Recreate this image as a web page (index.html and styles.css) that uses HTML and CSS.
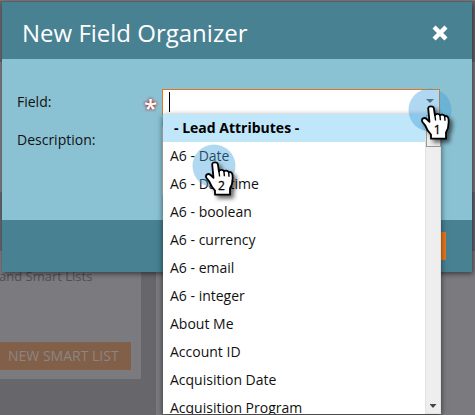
FILE: index.html
```html
<!DOCTYPE html>
<html lang="en">
<head>
<meta charset="utf-8">
<title>New Field Organizer</title>
<link rel="stylesheet" href="styles.css">
</head>
<body>
<main class="stage">
  <section class="backdrop">
    <div class="strip"></div>
    <div class="panels">
      <article class="card">
        <p class="card-text">and Smart Lists</p>
        <button class="card-button">NEW SMART LIST</button>
      </article>
      <article class="card-next"></article>
    </div>
  </section>
  <section class="modal">
    <header class="modal-header">
      <h1 class="title">New Field Organizer</h1>
      <svg class="close" width="16" height="16" viewBox="0 0 16 16"><path d="M3.600 3.600L12.400 12.400M12.400 3.600L3.600 12.400" stroke="#fff" stroke-width="4.400" stroke-linecap="square"/></svg>
    </header>
    <div class="modal-body">
      <div class="row">
        <label class="label">Field:</label>
        <span class="required">*</span>
        <div class="combo"><i class="caret"></i><i class="arrow"></i></div>
      </div>
      <div class="row row-description">
        <label class="label">Description:</label>
        <div class="textarea"></div>
      </div>
    </div>
    <footer class="modal-footer"><div class="submit"></div></footer>
  </section>
  <div class="menu">
    <ul class="options">
      <li class="group">- Lead Attributes -</li>
      <li>A6 - Date</li>
      <li>A6 - Datetime</li>
      <li>A6 - boolean</li>
      <li>A6 - currency</li>
      <li>A6 - email</li>
      <li>A6 - integer</li>
      <li>About Me</li>
      <li>Account ID</li>
      <li>Acquisition Date</li>
      <li>Acquisition Program</li>
    </ul>
    <div class="scrollbar"><div class="thumb"></div><i class="down"></i></div>
  </div>
  <div class="pointer pointer-one">
    <svg width="60" height="64" viewBox="0 0 60 64">
      <circle class="halo" cx="22" cy="22" r="21.500"/>
      <g class="hand"><path class="palm" d="M20.200 20.500C20 17.700 25.500 17.500 25.900 20.300L26.900 27.300C27.800 25.300 31.300 25.500 31.900 27.300C33.200 26 36 26.400 36.700 28.300C38.500 27.500 40.400 28.500 40.500 31.200C41 36 40.700 40 38 44.500V50.700H23V46.500C20 43.300 18.300 40.500 17.300 37.600L14.300 33.700C13 30.600 16.300 28.800 18.600 31L21.500 33.800Z"/><path class="knuckle" d="M26.900 27l.7 5.500M31.900 27.300l.5 5M36.700 28.300l.3 4.500"/></g>
      <text class="number" x="29.200" y="46">1</text>
    </svg>
  </div>
  <div class="pointer pointer-two">
    <svg width="60" height="64" viewBox="0 0 60 64">
      <circle class="halo" cx="22" cy="22" r="21.500"/>
      <g class="hand"><path class="palm" d="M20.200 20.500C20 17.700 25.500 17.500 25.900 20.300L26.900 27.300C27.800 25.300 31.300 25.500 31.900 27.300C33.200 26 36 26.400 36.700 28.300C38.500 27.500 40.400 28.500 40.500 31.200C41 36 40.700 40 38 44.500V50.700H23V46.500C20 43.300 18.300 40.500 17.300 37.600L14.300 33.700C13 30.600 16.300 28.800 18.600 31L21.500 33.800Z"/><path class="knuckle" d="M26.900 27l.7 5.500M31.900 27.300l.5 5M36.700 28.300l.3 4.500"/></g>
      <text class="number" x="29.500" y="46">2</text>
    </svg>
  </div>
</main>
</body>
</html>
```

FILE: styles.css
```css
* { box-sizing: border-box; }
body { margin: 0; font: 14px/20px "Open Sans", "Noto Sans", sans-serif; color: #111; }
.stage { position: relative; width: 475px; height: 415px; overflow: hidden; background: #67666b; }
.backdrop { height: 415px; }
.strip { height: 251px; background: linear-gradient(#656469 0 61px, #7a797e 61px 191px, #626670 191px); border-top: 1px solid #77767b; }
.panels { display: flex; gap: 15px; }
.card { width: 141px; height: 128px; background: #7b7a7f; padding-top: 15px; }
.card-next { flex: 1; height: 164px; background: #7b7a7f; }
.card-text { margin: 0 0 0 -1px; height: 20px; line-height: 20px; font-size: 13px; color: #515055; white-space: nowrap; }
.card-button { display: block; width: 131px; height: 28px; margin: 56px 0 0; padding: 0 0 0 8px; border: 0; background: #815f49; color: #8d8584; font: 14px/28px "Open Sans", sans-serif; text-align: left; white-space: nowrap; }
.modal { position: absolute; left: 2px; top: 2px; width: 470px; height: 270px; display: flex; flex-direction: column; box-shadow: 1px 2px 5px rgba(0,0,0,.5); }
.modal-header { height: 57px; background: #478192; display: flex; align-items: center; justify-content: space-between; padding: 4px 24px 0 20px; }
.title { margin: 0; color: #fff; font-size: 24px; font-weight: 400; line-height: 36px; white-space: nowrap; }
.modal-body { height: 161px; background: #8ac2d3; padding-top: 30px; }
.row { display: flex; height: 26px; padding-left: 15px; }
.label { width: 126px; line-height: 26px; }
.required { width: 19px; padding-left: 1px; font-size: 24px; line-height: 37px; font-weight: 600; color: #fff; text-shadow: 0 0 3px #b03030, 0 0 3px #b03030; }
.combo { width: 278px; height: 26px; background: #fff; border: 1px solid #e0751d; display: flex; justify-content: space-between; padding: 2px 5px 2px 6px; }
.caret { width: 1px; height: 20px; background: #000; }
.arrow { width: 8px; height: 4px; margin-top: 7px; background: #505960; clip-path: polygon(0 0, 100% 0, 50% 100%); }
.row-description { margin-top: 12px; height: 68px; }
.textarea { margin-left: 19px; width: 278px; background: #fff; border: 1px solid #ccc; }
.modal-footer { height: 52px; background: #478192; padding: 12px 26px; display: flex; justify-content: flex-end; }
.submit { width: 80px; height: 28px; background: #e9771c; }
.menu { position: absolute; left: 163px; top: 114px; width: 278px; height: 300px; display: flex; overflow: hidden; background: #fff; box-shadow: 0 2px 6px rgba(0,0,0,.6); }
.options { flex: 1; margin: 0; padding: 0; list-style: none; }
.options li { height: 28px; padding-left: 7px; line-height: 28px; white-space: nowrap; }
.options .group { padding-left: 11px; background: #bfe7f9; font-weight: 700; color: #000; }
.scrollbar { width: 16px; background: #eee; border: 1px solid #e2e2e2; display: flex; flex-direction: column; justify-content: space-between; align-items: center; }
.thumb { width: 15px; height: 32px; border: 1px solid #999; background: #eee; }
.down { width: 7px; height: 4px; margin-bottom: 5px; background: #444; clip-path: polygon(0 0, 100% 0, 50% 100%); }
.pointer { position: absolute; width: 60px; height: 64px; }
.pointer svg { display: block; }
.pointer-one { left: 408px; top: 88px; }
.pointer-two { left: 192px; top: 144px; }
.halo { fill: #3c9ddb; fill-opacity: .4; }
.hand { filter: drop-shadow(3px 3px 2px rgba(0,0,0,.6)); }
.palm { fill: #fff; stroke: #000; stroke-width: 1.8px; stroke-linejoin: round; }
.knuckle { fill: none; stroke: #000; stroke-width: 1.4px; }
.number { font: 12px "Open Sans", sans-serif; fill: #000; stroke: #000; stroke-width: .3px; text-anchor: middle; }
```
